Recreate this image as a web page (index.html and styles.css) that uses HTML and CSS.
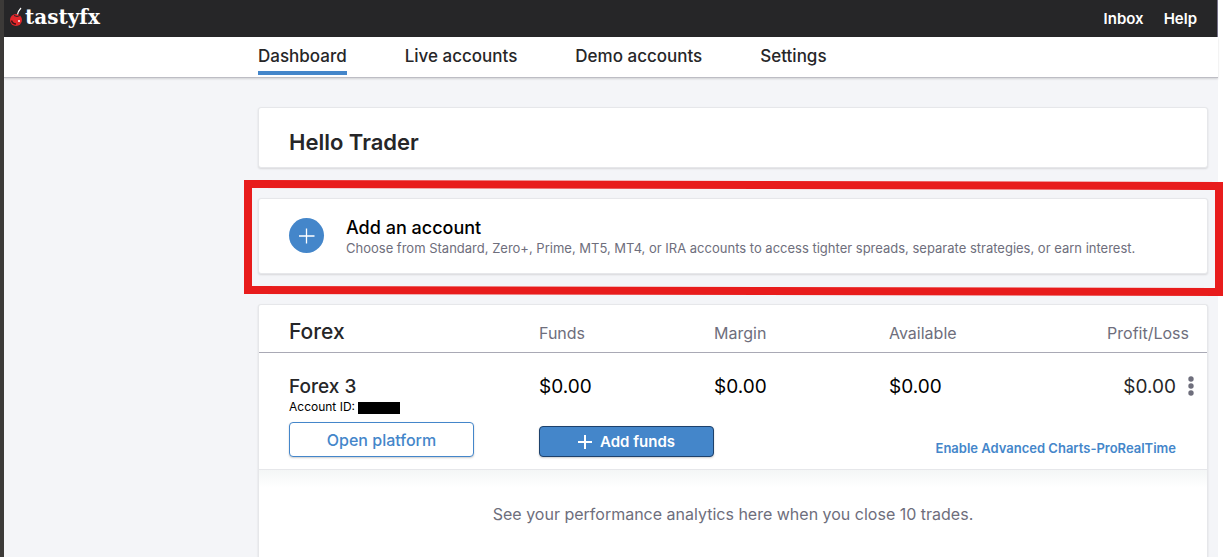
FILE: index.html
```html
<!DOCTYPE html>
<html lang="en">
<head>
  <meta charset="UTF-8">
  <title>tastyfx - Dashboard</title>
  <meta name="viewport" content="width=device-width, initial-scale=1">
  <link rel="stylesheet" href="styles.css">
</head>
<body>
<div class="page">

  <header class="topbar">
    <a class="logo" href="#">
      <svg class="cherry" viewBox="0 0 14 20" aria-hidden="true">
        <path d="M7 9C7.500 6 9 3 11 1" fill="none" stroke="#fff" stroke-width="1.200"/>
        <circle cx="6" cy="13" r="6" fill="#e3272b"/>
        <path d="M1.500 13.500Q2.500 17 6 17" fill="none" stroke="#3a1416" stroke-width="1.500"/>
        <path d="M4 8.500Q7 10.500 10 8.500" fill="none" stroke="#262628" stroke-width="1"/>
        <circle cx="9" cy="14" r="1" fill="#fff"/>
      </svg>
      tastyfx
    </a>
    <nav class="top-links">
      <a href="#">Inbox</a>
      <a href="#">Help</a>
    </nav>
  </header>

  <nav class="menu">
    <a class="active" href="#">Dashboard</a>
    <a href="#">Live accounts</a>
    <a href="#">Demo accounts</a>
    <a href="#">Settings</a>
  </nav>

  <main class="content">
    <section class="card hello">
      <h1>Hello Trader</h1>
    </section>

    <section class="card add-account">
      <button class="round-btn" aria-label="Add an account">
        <svg viewBox="0 0 35 35" aria-hidden="true">
          <path d="M17.500 10.500V25.500M10 18H25.500" stroke="#fff" stroke-width="1.300"/>
        </svg>
      </button>
      <div>
        <h2>Add an account</h2>
        <p>Choose from Standard, Zero+, Prime, MT5, MT4, or IRA accounts to access tighter spreads, separate strategies, or earn interest.</p>
      </div>
      <svg class="highlight" viewBox="0 0 979 116" preserveAspectRatio="none" aria-hidden="true">
        <path fill-rule="evenodd" fill="#e81c1c" d="M0 0L979 2V116L0 114ZM8 8V106L971 108V10Z"/>
      </svg>
    </section>

    <section class="card accounts">
      <table>
        <thead>
          <tr>
            <th class="col-name">Forex</th>
            <th class="col-value">Funds</th>
            <th class="col-value">Margin</th>
            <th class="col-value">Available</th>
            <th class="col-profit">Profit/Loss</th>
          </tr>
        </thead>
        <tbody>
          <tr class="values">
            <td class="col-name">
              <div class="account-name">Forex 3</div>
              <div class="account-id">Account ID: <span class="redacted"></span></div>
            </td>
            <td>$0.00</td>
            <td>$0.00</td>
            <td>$0.00</td>
            <td class="col-profit">
              <div class="profit">
                $0.00
                <button class="more" aria-label="More options">
                  <svg viewBox="0 0 6 20" aria-hidden="true">
                    <circle cx="3" cy="3" r="2.700"/>
                    <circle cx="3" cy="10" r="2.700"/>
                    <circle cx="3" cy="17" r="2.700"/>
                  </svg>
                </button>
              </div>
            </td>
          </tr>
          <tr class="actions">
            <td class="col-name"><button class="btn btn-outline">Open platform</button></td>
            <td>
              <button class="btn btn-primary">
                <svg viewBox="0 0 14 14" aria-hidden="true"><path d="M7 0V14M0 7H14" stroke="#fff" stroke-width="2"/></svg>
                Add funds
              </button>
            </td>
            <td colspan="3" class="chart-link"><a href="#">Enable Advanced Charts-ProRealTime</a></td>
          </tr>
        </tbody>
      </table>
      <p class="analytics">See your performance analytics here when you close 10 trades.</p>
    </section>
  </main>

</div>
</body>
</html>
```
FILE: styles.css
```css
* { margin: 0; padding: 0; box-sizing: border-box; }
body {
  font-family: 'Inter', 'Liberation Sans', sans-serif;
  font-size: 16px;
  color: #262628;
  background: #fff;
}
.page {
  min-height: 100vh;
  display: flex;
  flex-direction: column;
  margin-right: 6px;
  background: #f4f5f8;
  border-left: 4px solid #3c3a38;
}
a { color: inherit; text-decoration: none; }
button { font-family: inherit; cursor: pointer; }

.topbar {
  display: flex;
  align-items: center;
  justify-content: space-between;
  height: 37px;
  padding: 0 20px 0 6px;
  background: #262628;
  border-right: 1px solid #77738a;
  color: #fff;
}
.logo {
  display: flex;
  align-items: center;
  gap: 1px;
  padding-bottom: 4px;
  font-family: 'DejaVu Serif', serif;
  font-size: 20px;
  font-weight: bold;
}
.cherry { width: 14px; height: 20px; }
.top-links { display: flex; gap: 20px; font-size: 15px; font-weight: 600; }

.menu {
  display: flex;
  gap: 58px;
  height: 41px;
  padding-left: 254px;
  background: #fff;
  border-bottom: 1px solid #bdbdc4;
  box-shadow: 0 1px 2px rgba(0, 0, 0, 0.15);
  font-size: 17px;
  font-weight: 500;
}
.menu a { height: 38px; line-height: 38px; }
.menu .active { border-bottom: 4px solid #4486ca; }

.content {
  flex: 1;
  display: flex;
  flex-direction: column;
  gap: 30px;
  padding: 29px 10px 0 254px;
}
.card {
  position: relative;
  background: #fff;
  border: 1px solid #e6e7ea;
  border-radius: 3px;
  box-shadow: 0 1px 2px rgba(0, 0, 0, 0.12);
}
.hello { padding: 20px 30px 10px; }
.hello h1 { font-size: 22px; font-weight: 600; line-height: 29px; }

.add-account {
  display: flex;
  align-items: flex-start;
  gap: 22px;
  padding: 19px 30px 15px;
}
.add-account h2 { font-size: 18px; font-weight: 500; line-height: 20px; color: #000; }
.add-account p { font-size: 13px; line-height: 20px; color: #6e6e7c; }
.round-btn {
  width: 35px;
  height: 35px;
  border: none;
  border-radius: 50%;
  background: #4486ca;
}
.round-btn svg { display: block; width: 35px; height: 35px; }
/* hand drawn marker round the card */
.highlight {
  position: absolute;
  top: -19px;
  left: -15px;
  width: calc(100% + 31px);
  height: calc(100% + 42px);
  pointer-events: none;
}

.accounts {
  flex: 1;
  border-bottom: none;
  border-radius: 3px 3px 0 0;
}
table { width: 100%; border-collapse: collapse; table-layout: fixed; }
th, td { text-align: left; vertical-align: top; font-weight: 400; }
th {
  height: 47px;
  padding-top: 17px;
  border-bottom: 1px solid #a9a9b5;
  font-size: 16px;
  line-height: 22px;
  color: #6e6e7c;
}
.col-name { width: 280px; padding-left: 30px; }
.col-value { width: 175px; }
th.col-name { padding-top: 16px; font-size: 21px; font-weight: 500; color: #262628; }
th.col-profit { padding-right: 18px; text-align: right; }
.values td { height: 70px; padding-top: 23px; font-size: 19px; line-height: 22px; color: #000; }
.values .account-name { font-size: 19px; font-weight: 500; color: #262628; }
.account-id { font-size: 12px; line-height: 18px; }
.redacted {
  display: inline-block;
  width: 42px;
  height: 12px;
  background: #000;
  vertical-align: -3px;
}
.profit {
  display: flex;
  align-items: flex-start;
  justify-content: flex-end;
  gap: 12px;
  padding-right: 13px;
  color: #262628;
}
.more { border: none; background: none; }
.more svg { display: block; width: 6px; height: 20px; fill: #6e6e7c; }

.actions td { height: 47px; }
.btn {
  display: flex;
  align-items: center;
  justify-content: center;
  border-radius: 4px;
  box-shadow: 0 1px 2px rgba(0, 0, 0, 0.2);
  font-size: 15px;
}
.btn-outline {
  width: 185px;
  height: 35px;
  background: #fff;
  border: 1px solid #4486ca;
  color: #4486ca;
  font-size: 16px;
  font-weight: 500;
}
.btn-primary {
  width: 175px;
  height: 31px;
  margin-top: 4px;
  gap: 8px;
  background: #4486ca;
  border: 1px solid #1d416b;
  color: #fff;
  font-weight: 600;
}
.btn-primary svg { width: 14px; height: 14px; }
td.chart-link {
  padding: 16px 31px 0 0;
  text-align: right;
  font-size: 13px;
  line-height: 20px;
  font-weight: 600;
  color: #4486ca;
}
.analytics {
  padding: 35px 20px;
  border-top: 1px solid #e6e7ea;
  background: linear-gradient(#f4f6f6, #fff 18px);
  font-size: 16px;
  line-height: 18px;
  text-align: center;
  color: #6e6e7c;
}
```
